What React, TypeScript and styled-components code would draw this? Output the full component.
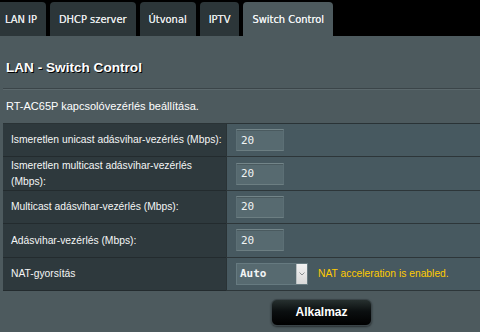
import * as React from "react";
import styled, { createGlobalStyle } from "styled-components";

const GlobalStyle = createGlobalStyle`
  html, body {
    margin: 0;
    padding: 0;
    background-color: #4d5a5e;
    overflow: hidden;
  }
  body {
    font-family: "Liberation Sans", Arial, sans-serif;
    width: 480px;
    height: 332px;
  }
`;

const Page = styled.div`
  width: 640px;
  height: 332px;
  background-color: #4d5a5e;
`;

const TabBar = styled.div`
  display: flex;
  align-items: flex-end;
  gap: 4px;
  height: 36px;
  background-color: #000;
`;

const Tab = styled.div<{ $active?: boolean }>`
  display: flex;
  align-items: center;
  height: 34px;
  padding: 0 9px;
  border-radius: 4px 4px 0 0;
  background-color: ${({ $active }) => ($active ? "#4d5a5e" : "#2c3639")};
  color: ${({ $active }) => ($active ? "#f0f3f4" : "#e6e9ea")};
  font-family: "DejaVu Sans Condensed", "DejaVu Sans", Verdana, sans-serif;
  font-size: 11px;
  font-weight: 400;
  text-shadow: 0 0 0.4px currentColor;
  white-space: nowrap;
  box-sizing: border-box;
  &:first-child {
    margin-left: -4px;
    border-top-left-radius: 0;
  }
`;

const Content = styled.div`
  padding: 0 0 0 3px;
`;

const Heading = styled.h2`
  margin: 0;
  padding: 24px 0 12px 3px;
  font-family: "Liberation Sans", Arial, sans-serif;
  font-size: 13.6px;
  font-weight: 700;
  color: #fff;
  text-shadow: 1px 1px 0 #000;
  line-height: 16px;
  border-bottom: 1px solid #3b4549;
  box-shadow: 0 1px 0 #5b686c;
`;

const Description = styled.p`
  margin: 0;
  padding: 10px 0 10px 3px;
  font-size: 11px;
  line-height: 14px;
  color: #fff;
`;

const Table = styled.div`
  display: grid;
  grid-template-columns: 223px 1fr;
  border-top: 1px solid #2a3336;
`;

const Label = styled.div`
  display: flex;
  align-items: center;
  box-sizing: border-box;
  height: 33.4px;
  padding: 0 2px 0 8px;
  background-color: #2e393d;
  border-bottom: 1px solid #232b2e;
  color: #f4f6f6;
  font-size: 10.3px;
  line-height: 15.5px;
`;

const Field = styled.div`
  display: flex;
  align-items: center;
  gap: 10px;
  box-sizing: border-box;
  height: 33.4px;
  padding-left: 9px;
  background-color: #475960;
  border-bottom: 1px solid #2d3639;
  border-left: 1px solid #2a3336;
`;

const NumberInput = styled.div`
  box-sizing: border-box;
  width: 48px;
  height: 22px;
  padding: 0 4px;
  display: flex;
  align-items: center;
  background-color: #576a70;
  border-top: 1px solid #738589;
  border-bottom: 1px solid #6c7e82;
  border-left: 1px solid #5c6f75;
  border-right: 1px solid #5c6f75;
  box-shadow: inset 0 1px 0 #4a5a5f;
  color: #f2f4f4;
  font-family: "DejaVu Sans Mono", "Liberation Mono", monospace;
  font-size: 11px;
`;

const Select = styled.div`
  box-sizing: border-box;
  display: flex;
  width: 72px;
  height: 22px;
  background-color: #576a70;
  border: 1px solid #667a80;
`;

const SelectValue = styled.div`
  flex: 1;
  display: flex;
  align-items: center;
  padding-left: 3px;
  color: #f2f4f4;
  font-family: "DejaVu Sans Mono", "Liberation Mono", monospace;
  font-size: 11px;
  font-weight: 600;
`;

const SelectArrow = styled.div`
  width: 10px;
  display: flex;
  align-items: center;
  justify-content: center;
  background: linear-gradient(#f2f2f2, #d9d9d9);
  border-left: 1px solid #b9c0c2;
`;

const Note = styled.span`
  color: #ffcc00;
  font-size: 10.3px;
`;

const Actions = styled.div`
  display: flex;
  justify-content: center;
  padding-top: 8px;
`;

const Button = styled.button`
  width: 101px;
  height: 27px;
  border-radius: 6px;
  border: 1px solid #3a4448;
  background: linear-gradient(#27302f 0%, #0b0f10 45%, #000 100%);
  box-shadow: 0 1px 2px rgba(0, 0, 0, 0.5);
  color: #fff;
  font-family: "Liberation Sans", Arial, sans-serif;
  font-size: 12px;
  font-weight: 700;
  cursor: pointer;
`;

const tabs = ["LAN IP", "DHCP szerver", "Útvonal", "IPTV", "Switch Control"];

const rows = [
  "Ismeretlen unicast adásvihar-vezérlés (Mbps):",
  "Ismeretlen multicast adásvihar-vezérlés (Mbps):",
  "Multicast adásvihar-vezérlés (Mbps):",
  "Adásvihar-vezérlés (Mbps):",
];

export default function App() {
  return (
    <Page>
      <GlobalStyle />
      <TabBar>
        {tabs.map((t) => (
          <Tab key={t} $active={t === "Switch Control"}>
            {t}
          </Tab>
        ))}
      </TabBar>
      <Content>
        <Heading>LAN - Switch Control</Heading>
        <Description>RT-AC65P kapcsolóvezérlés beállítása.</Description>
        <Table>
          {rows.map((r) => (
            <React.Fragment key={r}>
              <Label>{r}</Label>
              <Field>
                <NumberInput>20</NumberInput>
              </Field>
            </React.Fragment>
          ))}
          <Label>NAT-gyorsítás</Label>
          <Field>
            <Select>
              <SelectValue>Auto</SelectValue>
              <SelectArrow>
                <svg width="6" height="4" viewBox="0 0 6 4">
                  <path d="M0.5 0.5 L3 3 L5.5 0.5" fill="none" stroke="#8a8f91" strokeWidth="1" />
                </svg>
              </SelectArrow>
            </Select>
            <Note>NAT acceleration is enabled.</Note>
          </Field>
        </Table>
        <Actions>
          <Button>Alkalmaz</Button>
        </Actions>
      </Content>
    </Page>
  );
}
